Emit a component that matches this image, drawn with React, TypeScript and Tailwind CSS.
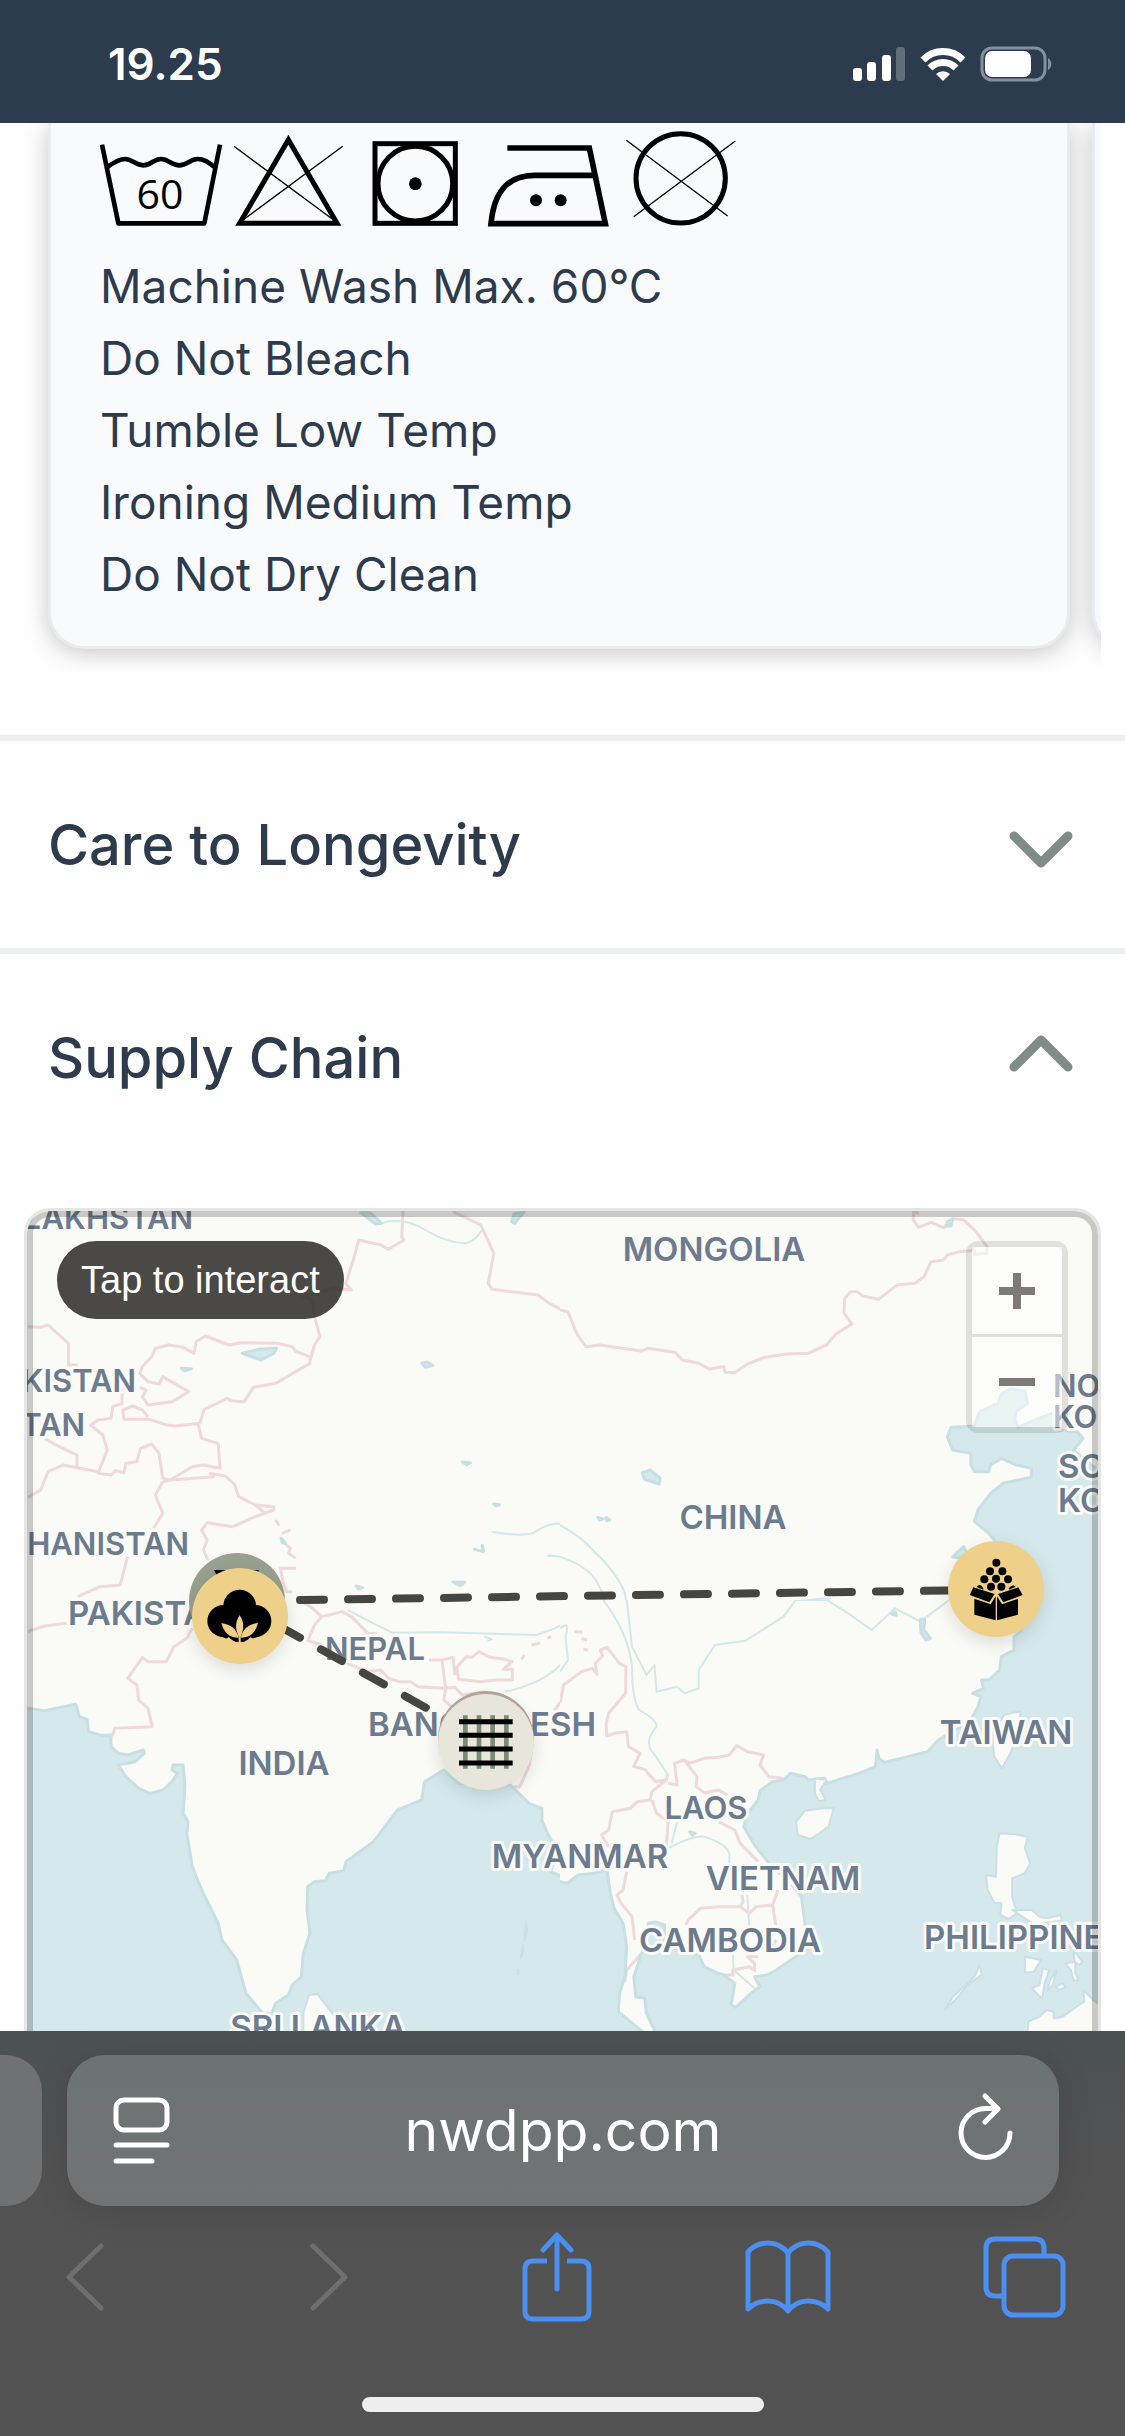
import React from 'react';

const careLines = [
  'Machine Wash Max. 60°C',
  'Do Not Bleach',
  'Tumble Low Temp',
  'Ironing Medium Temp',
  'Do Not Dry Clean',
];

type Label = { text: string; x: number; y: number; size: number; anchor?: 'start' | 'middle' | 'end' };

const labels: Label[] = [
  { text: 'KAZAKHSTAN', x: 193, y: 1229, size: 31, anchor: 'end' },
  { text: 'MONGOLIA', x: 714, y: 1261, size: 33, anchor: 'middle' },
  { text: 'UZBEKISTAN', x: 136, y: 1392, size: 31, anchor: 'end' },
  { text: 'TURKMENISTAN', x: 85, y: 1436, size: 31, anchor: 'end' },
  { text: 'AFGHANISTAN', x: 189, y: 1555, size: 31, anchor: 'end' },
  { text: 'PAKISTAN', x: 68, y: 1625, size: 33 },
  { text: 'NEPAL', x: 375, y: 1660, size: 31, anchor: 'middle' },
  { text: 'BANGLADESH', x: 482, y: 1736, size: 33, anchor: 'middle' },
  { text: 'INDIA', x: 284, y: 1775, size: 33, anchor: 'middle' },
  { text: 'MYANMAR', x: 580, y: 1868, size: 33, anchor: 'middle' },
  { text: 'LAOS', x: 706, y: 1819, size: 31, anchor: 'middle' },
  { text: 'VIETNAM', x: 783, y: 1890, size: 33, anchor: 'middle' },
  { text: 'CAMBODIA', x: 730, y: 1952, size: 33, anchor: 'middle' },
  { text: 'TAIWAN', x: 1006, y: 1744, size: 33, anchor: 'middle' },
  { text: 'PHILIPPINES', x: 924, y: 1949, size: 33 },
  { text: 'SRI LANKA', x: 318, y: 2039, size: 33, anchor: 'middle' },
  { text: 'CHINA', x: 733, y: 1529, size: 33, anchor: 'middle' },
  { text: 'NORTH', x: 1053, y: 1397, size: 31 },
  { text: 'KOREA', x: 1053, y: 1428, size: 31 },
  { text: 'SOUTH', x: 1058, y: 1478, size: 33 },
  { text: 'KOREA', x: 1058, y: 1512, size: 33 },
];

type TileData = {
  box: [number, number, number, number];
  view: string;
  water: string;
  land?: string;
  borders: string;
  rivers: string;
};

const tiles: TileData[] = [
  // north-west
  {
    box: [0, 1190, 560, 410],
    view: '0 0 1514 1230',
    water:
      'M655 490L700 478L748 475L740 490L705 510ZM1140 520L1155 517L1170 526L1150 532ZM490 535L518 536L498 543ZM975 68L1000 68L1032 100L1015 102ZM1383 95L1390 72L1417 66L1400 88L1392 100ZM1250 816L1272 819L1262 824ZM1335 942L1350 944L1342 948ZM1225 1176L1256 1177L1245 1187ZM962 1188L980 1193L970 1197ZM1283 1078L1304 1084L1304 1066L1307 1085ZM760 1045L772 1060L764 1058Z',
    borders:
      'M1090 60L1086 140L1092 150L1050 178L1030 165L970 150L955 210L935 280L950 300L900 295L820 320L845 330L848 370L865 440L850 465L838 515M385 530L410 500L420 475L455 465L495 472L525 490L530 455L555 438L620 465L650 458L750 460L790 470L800 484L838 500L838 520L745 580L685 592L660 635L625 632L615 625L552 658L540 700L475 708L450 705L405 688L335 688L332 660L358 648L385 660L400 680M385 530L378 550L400 575L430 582L440 560L510 605L465 635L400 645L385 620L395 600L378 592M330 610L330 640L305 650L300 685L265 690L245 705L278 735L290 780L265 850L300 855L312 842L335 848L340 820L370 815L380 775L410 762L430 790L440 865L460 870L520 830L550 825L595 835L590 760L545 745L535 700M75 410L110 412L130 405L185 460L185 525L210 525M120 745L160 770L208 795L208 830M75 922L110 900L130 845L170 825L265 845M440 875L460 870L580 860M565 850L610 858L635 885L645 920L690 945L740 950L740 960L690 980L630 1010L560 998L545 1020L560 1050L550 1080L562 1110M690 945L715 968M440 875L420 915L440 970L415 1015M345 1100L325 1185L270 1190L210 1220M1225 65L1300 105L1335 190L1320 280L1330 298L1455 315L1485 340L1530 365L1568 450M745 990L755 1007M762 1030L785 1020M770 1060L785 1075L780 1090L800 1105M800 1135L758 1135L765 1175L775 1205L790 1205',
    rivers:
      'M1030 100Q1090 80 1150 120T1260 160Q1290 150 1302 120M1330 1025Q1400 1040 1440 1030Q1500 985 1530 1010L1568 1050M1480 1097Q1530 1095 1568 1130',
  },
  // north-east
  {
    box: [560, 1190, 565, 410],
    view: '0 0 1568 1138',
    water:
      'M1075 685L1085 659L1150 655L1165 615L1215 592L1225 566L1250 552L1290 557L1298 592L1265 615L1262 638L1272 659L1300 646L1365 620L1390 638L1380 666L1435 671L1452 689L1425 722L1480 768L1620 796V1221H1340L1205 971L1190 953L1150 920L1160 888L1195 842L1230 814L1308 797L1308 772L1265 763L1225 745L1195 763L1190 782L1150 782L1140 763L1140 731L1090 722ZM228 785L250 777L278 800L275 816L235 803ZM105 909L120 913L110 916ZM128 909L138 916L130 918ZM1090 1018L1120 990L1130 1008L1110 1022ZM1075 88L1090 81L1085 100L1072 100Z',
    borders:
      'M0 333L22 338L48 402L72 435L110 430L225 447L245 439L320 451L340 472L385 481L415 497L455 490L458 506L485 507L520 483L570 464L630 455L690 453L740 430L765 400L810 372L788 342L790 301L805 283L825 282L840 294L885 303L935 264L985 259L1010 241L1030 199L1065 194L1075 180L1110 171L1150 168L1150 178L1185 176L1185 157L1155 116L1120 83L1090 79L1065 105L1030 90L995 104L980 83L982 60L995 65',
    rivers:
      'M0 930Q60 962 95 1004Q160 1064 180 1119L195 1221M0 1018Q80 1045 105 1092L165 1221M640 1143L740 1133L780 1155M900 1165L930 1156L950 1165',
  },
  // south-west
  {
    box: [0, 1600, 560, 450],
    view: '0 0 1514 1350',
    water:
      'M-20 325L75 325L120 332L205 313L215 350L235 358L240 395L270 405L300 408L300 440L320 460L345 465L388 450L390 460L365 485L320 495L340 530L375 565L405 580L440 570L465 545L480 520L465 510L468 495L495 495L500 560L495 640L508 665L505 700L520 800L545 870L590 970L600 1020L640 1080L665 1180L710 1240L735 1240L745 1210L780 1185L790 1155L815 1130L820 1060L838 1000L830 930L832 860L850 845L880 842L890 820L930 812L935 785L1010 725L1075 630L1140 600L1148 545L1200 510L1240 550L1380 555L1430 610L1465 625L1465 660L1480 700L1500 740L1500 780L1488 815L1520 830L1530 850L1600 840V1400H-20Z',
    land: 'M835 1185L858 1182L905 1250V1400H820V1240ZM1422 970L1426 990L1418 1020L1420 990ZM1414 1035L1415 1050L1408 1075ZM1400 1110L1404 1118L1398 1122Z',
    borders:
      'M75 95L120 78L180 70M520 85L505 115L470 140L450 185L400 185L385 172L345 235L370 255L375 300L400 325L412 380L310 385L305 405L285 405M800 -5L840 20L870 50L925 35L950 50L995 100L1020 102M870 50L850 75L832 122L870 135M930 185L990 215L1030 210L1050 235L1080 245L1110 245L1130 260L1200 265L1230 262L1250 285L1310 275M1160 180L1195 180L1205 265L1200 300L1220 320M1195 180L1225 172L1230 225M1240 195L1260 170L1275 172L1295 155L1325 172L1365 178L1385 185L1360 208L1385 208L1385 240L1340 240L1300 245L1240 238L1235 205ZM1568 215L1530 255L1520 300L1498 332M1440 430L1430 500L1405 560L1390 560M1437 135L1460 130M1410 178L1418 165M1480 115L1490 110',
    rivers:
      'M940 30L1000 65L1060 98L1190 97L1450 105L1500 85L1530 68L1535 85L1520 130L1535 170Q1480 250 1365 275M1310 110L1330 118L1318 122',
  },
  // south-east
  {
    box: [560, 1600, 565, 450],
    view: '0 0 1568 1350',
    water:
      'M1310 -20L1278 95L1260 110L1260 150L1225 170L1220 210L1190 240L1170 240L1175 265L1145 280L1168 290L1160 320L1145 350L1120 375L1050 420L1020 455L900 487L885 475L880 450L878 475L875 500L830 520L740 550L735 535L690 540L680 530L640 520L620 540L590 545L555 572L550 600L520 640L510 680L540 735L580 790L640 850L670 890L680 970L682 1050L600 1110L575 1125L540 1130L555 1160L530 1180L488 1222L475 1215L485 1150L455 1125L435 1118L400 1100L385 1065L330 1050L290 1030L290 975L265 966L245 970L240 1020L225 1065L205 1130L210 1190L235 1195L240 1240L262 1290V1400H1700V-20ZM-20 860L0 845L20 850L50 825L95 820L130 808L140 880L150 925L175 970L185 1040L180 1130L165 1180L162 1235L195 1265L235 1300V1400H-20ZM360 695L375 700L368 706ZM920 42L930 36L934 46ZM1000 58L1012 58L1010 90L1028 115L1015 120L1002 98Z',
    land: 'M1232 345L1255 338L1278 335L1272 400L1250 460L1226 505L1205 470L1200 410ZM680 632L730 625L760 625L745 680L720 700L695 717L660 705L655 665ZM708 535L740 540L722 570L738 600L718 603L707 580ZM1220 700L1265 703L1298 710L1290 745L1305 790L1290 820L1255 835L1255 890L1268 940L1245 957L1222 945L1225 910L1205 908L1187 870L1182 825L1210 830L1212 740ZM1255 930L1310 930L1330 950L1350 955L1390 945L1392 962L1340 970L1310 968L1290 955ZM1068 1230L1090 1190L1150 1130L1165 1095L1170 1125L1130 1155L1105 1190ZM1290 1070L1335 1080L1315 1115L1290 1118ZM1340 1105L1358 1110L1345 1150L1338 1197L1310 1165L1330 1155ZM1352 1172L1360 1140L1378 1110L1368 1155ZM1402 1090L1430 1085L1430 1120L1440 1140L1425 1142L1418 1110ZM1425 1050L1450 1085L1440 1095L1428 1085ZM1375 1160L1395 1150L1403 1162L1385 1170ZM1453 1170L1480 1200L1520 1230V1400H1290L1300 1265L1330 1250L1350 1230L1370 1235L1370 1255L1395 1250L1440 1215L1455 1205Z',
    borders:
      'M0 310L10 255L60 215L90 205L102 222L98 190L118 168L112 150L130 142L165 190L183 200L182 280L135 340L128 370L130 408L150 400L185 395L190 440L222 460L205 500L235 508L265 545L295 540L300 520M300 550L325 555L318 490L345 480L360 490L400 475L440 472L470 465L490 437L520 455L565 465L555 495L580 530L620 535M345 480L380 530L378 560L400 578L440 570L465 585M295 540L255 575L250 600L215 605L195 625L145 635L135 690L115 705L135 740M255 600L268 640L300 665L295 740M440 665L485 690L500 730L550 785M185 815L175 870L158 885L170 910L200 950L207 1020M225 1062L185 1110L180 1145M350 975L355 960L390 925L440 920L500 920L525 940L545 920L590 915L605 870M590 915L600 985M505 885L508 905L500 920M550 1070L520 1070L540 1090L540 1112L525 1100L480 1110L480 1125L455 1125M600 1020L590 1035M40 95L62 97M60 115L75 120M65 148L78 150',
    rivers:
      'M120 0Q190 100 200 200Q200 300 220 330Q270 360 268 380Q230 430 260 460L300 525M185 0L200 140L240 225L262 195L268 275L325 260L345 280L385 265L385 210L430 135L515 122L620 50L655 0L740 0L800 40L865 90L930 25L1000 65L1080 0M300 745Q370 705 400 710Q460 730 470 760V800M520 885L525 980M325 665L310 730M480 1065L482 1110L545 1170M0 85Q30 60 15 110L22 180L0 215',
  },
];

const Tile = ({ tile }: { tile: TileData }) => {
  const [x, y, width, height] = tile.box;
  return (
    <svg
      x={x}
      y={y}
      width={width}
      height={height}
      viewBox={tile.view}
      preserveAspectRatio="none"
      fill="none"
      strokeLinejoin="round"
      className="[&_path]:[vector-effect:non-scaling-stroke]"
    >
      <path d={tile.borders} stroke="#efd9dc" strokeWidth="3" />
      <path d={tile.rivers} stroke="#d3e8e7" strokeWidth="2" />
      <path d={tile.water} fill="#d5e8eb" stroke="#c6e0e3" strokeWidth="3" />
      {tile.land && <path d={tile.land} fill="#fafaf6" stroke="#c9e1e4" strokeWidth="2" />}
    </svg>
  );
};

const CottonIcon = () => (
  <svg viewBox="38 84 288 288" className="size-24" aria-hidden="true">
    <circle cx="181" cy="198" r="49" />
    <circle cx="132" cy="243" r="48" />
    <circle cx="228" cy="243" r="48" />
    <path d="M140 200h82l20 88l-50 18h-22l-50 -18z" />
    <g fill="#eed08a">
      <path d="M181 225c-14 22-14 42-2 66h4c12-24 12-44-2-66z" />
      <path d="M126 249c28 4 46 18 52 44c-28 0-44-14-52-44z" />
      <path d="M236 249c-28 4-46 18-52 44c28 0 44-14 52-44z" />
      <path d="M178 286h6v26h-6zM150 290l14 6 13 10-2 6h-40l-4-10zM212 290l-14 6-13 10 2 6h40l4-10z" />
    </g>
    <path d="M146 289q18 2 29 11v7q-14-1-29-18zM216 289q-18 2-29 11v7q14-1 29-18z" />
  </svg>
);

const BoxIcon = () => (
  <svg viewBox="54 34 288 288" className="size-24" aria-hidden="true">
    <circle cx="199" cy="99" r="12" />
    <circle cx="180" cy="125" r="12" />
    <circle cx="217" cy="125" r="12" />
    <circle cx="163" cy="149" r="12" />
    <circle cx="198" cy="147" r="12" />
    <circle cx="234" cy="149" r="12" />
    <circle cx="183" cy="171" r="12" />
    <circle cx="214" cy="171" r="12" />
    <path d="M140 172q10-14 20 4v4zM236 176q12-14 21-5l-20 9z" />
    <path d="M130 173l64 20-16 25-59-22zM204 193l61-20 13 23-58 22z" />
    <path d="M133 207l49 17 15-24v72l-64-17zM201 200l15 24 48-17v48l-63 17z" />
  </svg>
);

const WeaveIcon = () => (
  <svg viewBox="774 461 288 288" className="size-24" aria-hidden="true">
    <path d="M856 525v160M897 525v160M938 525v160M979 525v160" stroke="#778b76" strokeWidth="14" />
    <path d="M837 544h161M837 585h161M837 626h161M837 668h161" stroke="#000" strokeWidth="15" />
  </svg>
);

const CareIcons = () => (
  <div className="flex h-[100px]" role="img" aria-label="Care symbols">
    <svg viewBox="30 12 387 300" className="w-[129px]" fill="none" stroke="#000" strokeWidth="14">
      <path d="M36 59L85 295H343L390 59" strokeLinejoin="round" />
      <path d="M52 126C72 112 88 102 104 102C128 102 135 121 160 121S190 102 213 102S245 121 268 121S300 102 323 102C342 102 355 112 374 126" />
      <text x="210" y="251" textAnchor="middle" fill="#000" stroke="none" fontSize="123" fontFamily="'Open Sans', sans-serif">
        60
      </text>
    </svg>
    <svg viewBox="417 12 387 300" className="w-[129px]" fill="none" stroke="#000" strokeWidth="15">
      <path d="M595 44L449 295H741Z" />
      <path d="M432 64L735 288M758 64L455 288" strokeWidth="4" />
    </svg>
    <svg viewBox="804 12 342 300" className="w-[114px]" fill="none" stroke="#000" strokeWidth="15">
      <rect x="855" y="56" width="241" height="239" />
      <circle cx="976" cy="176" r="112" />
      <circle cx="976" cy="176" r="19" fill="#000" stroke="none" />
    </svg>
    <svg viewBox="156 12 432 300" className="w-[144px]" fill="none" stroke="#000" strokeWidth="17">
      <path d="M262 69H508L556 296H213C222 200 262 151 345 151H520" />
      <circle cx="348" cy="226" r="18" fill="#000" stroke="none" />
      <circle cx="422" cy="226" r="18" fill="#000" stroke="none" />
    </svg>
    <svg viewBox="588 12 384 300" className="w-[128px]" fill="none" stroke="#000" strokeWidth="15">
      <circle cx="782" cy="160" r="134" />
      <path d="M619 46L923 273M946 48L641 275" strokeWidth="4" />
    </svg>
  </div>
);

const StatusBar = () => (
  <header className="flex h-[123px] shrink-0 items-center justify-between bg-[#2c3c4e] pt-1 pr-[72px] pl-[108px]">
    <span className="text-[44px] font-semibold text-white">19.25</span>
    <div className="flex items-center gap-[14px]">
      <svg viewBox="0 0 53 34" className="h-[34px] w-[53px]" fill="#fff" aria-hidden="true">
        <rect x="0" y="21" width="9" height="13" rx="3" />
        <rect x="14" y="15" width="9" height="19" rx="3" />
        <rect x="29" y="8" width="9" height="26" rx="3" />
        <rect x="43" y="0" width="9" height="34" rx="3" opacity="0.25" />
      </svg>
      <svg viewBox="0 0 46 34" className="h-[34px] w-[46px]" aria-hidden="true">
        <path d="M3 13A28 28 0 0 1 43 13M10 21A18 18 0 0 1 36 21" fill="none" stroke="#fff" strokeWidth="7" />
        <path d="M23 34L16 27A10 10 0 0 1 30 27Z" fill="#fff" />
      </svg>
      <svg viewBox="0 0 73 36" className="h-9 w-[73px]" aria-hidden="true">
        <rect x="2" y="2" width="63" height="32" rx="10" fill="none" stroke="#8390a0" strokeWidth="3" />
        <rect x="5" y="5" width="46" height="26" rx="7" fill="#fff" />
        <path d="M68 12a7 7 0 0 1 0 12z" fill="#8390a0" />
      </svg>
    </div>
  </header>
);

const Section = ({ title, open }: { title: string; open: boolean }) => (
  <h2 className="border-t-[6px] border-[#eceeef]">
    <button
      type="button"
      aria-expanded={open}
      className="flex h-[207px] w-full items-center justify-between pr-[52px] pl-12 text-left text-[56px] font-medium"
    >
      {title}
      <svg
        viewBox="0 0 64 48"
        className="h-12 w-16"
        fill="none"
        stroke="#7f8c88"
        strokeWidth="9"
        strokeLinecap="round"
        strokeLinejoin="round"
        aria-hidden="true"
      >
        <path d={open ? 'M5 33L32 6L59 33' : 'M5 15L32 42L59 15'} />
      </svg>
    </button>
  </h2>
);

const pin = 'absolute size-24 rounded-full shadow-[0_6px_18px_rgba(0,0,0,0.12)]';

const SupplyMap = () => (
  <div className="relative mx-6 h-[900px] overflow-hidden rounded-[26px] border-[3px] border-[#e5e6e4] bg-[#fafaf6]">
    <svg
      viewBox="27 1211 1071 894"
      preserveAspectRatio="xMinYMin slice"
      className="absolute inset-0 size-full"
      role="img"
      aria-label="Supply chain map"
    >
      {tiles.map((tile) => (
        <Tile key={tile.box.join()} tile={tile} />
      ))}
      <g fill="#6d7b8f" stroke="#fafaf6" strokeWidth="6" strokeLinejoin="round" fontWeight="600" className="[paint-order:stroke]">
        {labels.map(({ text, x, y, size, anchor }) => (
          <text key={`${text}${y}`} x={x} y={y} fontSize={size} textAnchor={anchor}>
            {text}
          </text>
        ))}
      </g>
      <g stroke="#454542" strokeWidth="8" strokeLinecap="round" strokeDasharray="24 24">
        <path d="M300 1600L980 1590" />
        <path d="M279 1626L430 1710" />
      </g>
    </svg>

    <button type="button" aria-label="Farm" className="absolute top-[342px] left-[162px] size-24 rounded-full bg-[#98a08f]">
      <svg viewBox="0 0 96 96" className="size-24" aria-hidden="true">
        <path d="M25 17h45l-6 12H31z" />
      </svg>
    </button>
    <button type="button" aria-label="Cotton" className={`${pin} top-[357px] left-[165px] bg-[#eed08a]`}>
      <CottonIcon />
    </button>
    <button type="button" aria-label="Packaging" className={`${pin} top-[330px] left-[921px] bg-[#eed08a]`}>
      <BoxIcon />
    </button>
    <div className="absolute top-[480px] left-[411px] size-24 rounded-full bg-[#b5a79c]"></div>
    <button type="button" aria-label="Fabric" className={`${pin} top-[483px] left-[411px] bg-[#e8e5da]`}>
      <WeaveIcon />
    </button>

    <div className="pointer-events-none absolute inset-0 rounded-[23px] border-[6px] border-black/20"></div>
    <button
      type="button"
      className="absolute top-[30px] left-[30px] h-[78px] rounded-full bg-[#2b2926]/85 px-6 font-['Liberation_Sans',sans-serif] text-[38px] text-white"
    >
      Tap to interact
    </button>
    <div className="absolute top-[30px] right-[30px] flex flex-col rounded-xl border-[6px] border-black/10 bg-clip-padding">
      <button
        type="button"
        aria-label="Zoom in"
        className="flex size-[90px] items-center justify-center border-b-[3px] border-[#dfdedb] bg-white/50"
      >
        <svg viewBox="0 0 36 36" className="size-9" stroke="#7f7a77" strokeWidth="8">
          <path d="M0 18h36M18 0v36" />
        </svg>
      </button>
      <button type="button" aria-label="Zoom out" className="flex size-[90px] items-center justify-center bg-white/50">
        <svg viewBox="0 0 36 36" className="size-9" stroke="#7f7a77" strokeWidth="8">
          <path d="M0 18h36" />
        </svg>
      </button>
    </div>
  </div>
);

const BrowserBar = () => (
  <footer className="shrink-0 bg-linear-to-b from-[#4b5151] to-[#525253] to-30% pt-6 pb-6">
    <div className="flex h-[151px] gap-[25px] pr-[66px]">
      <div className="w-[42px] rounded-r-[36px] bg-[#6f7172]"></div>
      <div className="flex flex-1 items-center justify-between rounded-[38px] bg-linear-to-b from-[#6c7373] to-[#727273] px-[46px] text-white shadow-[0_4px_36px_rgba(0,0,0,0.12)]">
        <button type="button" aria-label="Page menu">
          <svg viewBox="0 0 57 68" className="h-[68px] w-[57px]" fill="none" stroke="#fff" strokeWidth="5" strokeLinecap="round">
            <rect x="3" y="3" width="51" height="30" rx="8" />
            <path d="M3 48h51M3 64h36" />
          </svg>
        </button>
        <span className="text-[57px]">nwdpp.com</span>
        <button type="button" aria-label="Reload">
          <svg
            viewBox="0 -4 57 76"
            className="h-[76px] w-[57px]"
            fill="none"
            stroke="#fff"
            strokeWidth="5"
            strokeLinecap="round"
            strokeLinejoin="round"
          >
            <path d="M54 36A24.500 24.500 0 1 1 29.500 11.500H41" />
            <path d="M29 -1L42 12L29 25" />
          </svg>
        </button>
      </div>
    </div>
    <nav className="flex h-[142px] items-center justify-between pr-[59px] pl-[43px]" aria-label="Browser">
      <button type="button" disabled aria-label="Back" className="flex w-[84px] justify-center">
        <svg viewBox="0 0 40 68" className="h-[68px] w-10" fill="none" stroke="#6e6e6e" strokeWidth="5" strokeLinecap="round" strokeLinejoin="round">
          <path d="M36 3L4 34L36 65" />
        </svg>
      </button>
      <button type="button" disabled aria-label="Forward" className="flex w-[84px] justify-end pr-3">
        <svg viewBox="0 0 40 68" className="h-[68px] w-10" fill="none" stroke="#6e6e6e" strokeWidth="5" strokeLinecap="round" strokeLinejoin="round">
          <path d="M4 3L36 34L4 65" />
        </svg>
      </button>
      <button type="button" aria-label="Share" className="flex w-[84px] justify-end">
        <svg viewBox="0 0 76 90" className="h-[90px] w-[76px]" fill="none" stroke="#4b90f0" strokeWidth="5" strokeLinecap="round" strokeLinejoin="round">
          <path d="M28 29H14Q6 29 6 37V79Q6 87 14 87H62Q70 87 70 79V37Q70 29 62 29H48" strokeLinecap="butt" />
          <path d="M38 57V4M24 18L38 3L52 18" />
        </svg>
      </button>
      <button type="button" aria-label="Bookmarks" className="flex w-[88px] justify-center">
        <svg viewBox="0 0 88 76" className="h-[76px] w-[88px]" fill="none" stroke="#4b90f0" strokeWidth="5" strokeLinejoin="round">
          <path d="M44 14Q36 4 24 4T4 13V70Q12 62 24 62T44 72Q52 62 64 62T84 70V13Q76 4 64 4T44 14V72" />
        </svg>
      </button>
      <button type="button" aria-label="Tabs" className="flex w-[84px] justify-center">
        <svg viewBox="0 0 84 84" className="size-[84px]" fill="none" stroke="#4b90f0" strokeWidth="5">
          <rect x="22" y="21" width="59" height="59" rx="9" />
          <path d="M22 61H13Q4 61 4 52V13Q4 4 13 4H53Q62 4 62 13V21" />
        </svg>
      </button>
    </nav>
    <div className="mx-auto mt-[49px] h-[15px] w-[402px] rounded-full bg-[#eee]"></div>
  </footer>
);

const card =
  'w-[calc(100%-31px)] shrink-0 rounded-b-[36px] border-[3px] border-t-0 border-[#e9ebee] bg-[#f9fafc] shadow-[0_4px_24px_rgba(0,0,0,0.22)]';

export default function App() {
  return (
    <div className="flex h-screen flex-col bg-[#fefefe] font-['Inter',sans-serif] text-[#2d3b4c]">
      <StatusBar />
      <main className="min-h-0 flex-1 overflow-hidden">
        <div className="mx-6 mb-[63px] flex gap-[22px] overflow-hidden pb-[23px] pl-6">
          <section className={`${card} px-[49px] pt-[6px] pb-9`}>
            <CareIcons />
            <ul className="mt-[21px] text-[46px] leading-[72px]">
              {careLines.map((line) => (
                <li key={line}>{line}</li>
              ))}
            </ul>
          </section>
          <section className={card}></section>
        </div>
        <Section title="Care to Longevity" open={false} />
        <Section title="Supply Chain" open />
        <div className="pt-[47px]">
          <SupplyMap />
        </div>
      </main>
      <BrowserBar />
    </div>
  );
}
